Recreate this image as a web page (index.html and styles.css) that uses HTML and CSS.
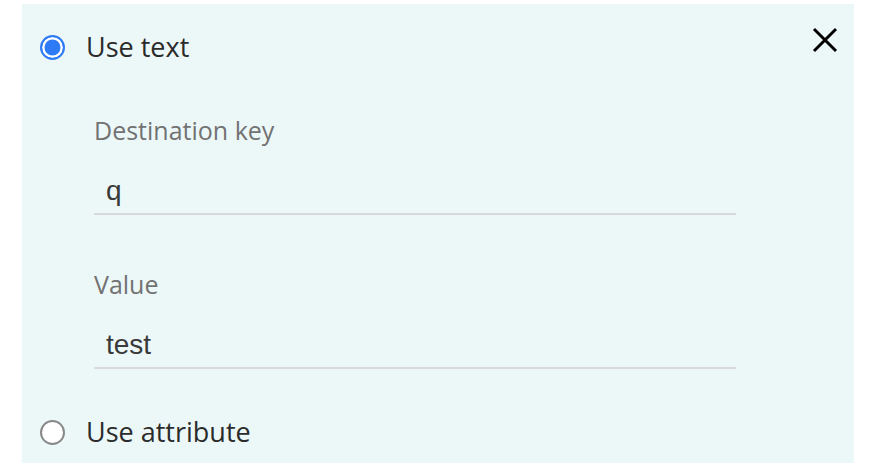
FILE: index.html
```html
<!DOCTYPE html>
<html>
<head>
<meta charset="utf-8">
<link rel="stylesheet" href="styles.css">
</head>
<body>
<div class="panel">
  <div class="option-row">
    <span class="radio radio-checked"></span>
    <span class="option-label">Use text</span>
    <button class="close" aria-label="Close">
      <svg width="26" height="26" viewBox="0 0 26 26"><path d="M2 2 L24 24 M24 2 L2 24" stroke="#000" stroke-width="3" fill="none"/></svg>
    </button>
  </div>
  <div class="fields">
    <div class="field">
      <div class="field-label">Destination key</div>
      <div class="field-input">q</div>
    </div>
    <div class="field field-second">
      <div class="field-label">Value</div>
      <div class="field-input">test</div>
    </div>
  </div>
  <div class="option-row option-last">
    <span class="radio"></span>
    <span class="option-label">Use attribute</span>
  </div>
</div>
</body>
</html>
```
FILE: styles.css
```css
html, body {
  margin: 0;
  padding: 0;
  background: #ffffff;
}
body {
  font-family: "Open Sans", "Noto Sans", sans-serif;
}
.panel {
  margin: 4px 18px 0 22px;
  height: 459px;
  background: #ecf8f8;
  box-sizing: border-box;
  padding: 28px 0 0 18px;
  display: flex;
  flex-direction: column;
}
.option-row {
  display: flex;
  align-items: center;
  height: 30px;
}
.radio {
  width: 25px;
  height: 25px;
  box-sizing: border-box;
  border-radius: 50%;
  border: 2px solid #888888;
  background: #ffffff;
  flex: none;
}
.radio-checked {
  border-color: #2f7bf5;
  background: #2f7bf5;
  box-shadow: inset 0 0 0 2.5px #ffffff;
}
.option-label {
  margin-left: 21px;
  font-size: 27px;
  color: #2b2b2b;
  line-height: 30px;
}
.close {
  margin-left: auto;
  margin-right: 16px;
  align-self: flex-start;
  margin-top: -5px;
  border: 0;
  background: transparent;
  padding: 0;
  width: 26px;
  height: 26px;
  display: flex;
}
.fields {
  margin-left: 54px;
  width: 642px;
  padding-top: 53px;
}
.field-label {
  font-size: 25px;
  color: #727272;
  line-height: 30px;
}
.field-input {
  margin-top: 31px;
  padding-left: 12px;
  font-family: "Liberation Sans", Arial, sans-serif;
  font-size: 28px;
  color: #3a3a3a;
  line-height: 30px;
  border-bottom: 2px solid #d9d9d9;
  padding-bottom: 7px;
}
.field-second {
  margin-top: 54px;
}
.option-last {
  margin-top: 48px;
}
```
